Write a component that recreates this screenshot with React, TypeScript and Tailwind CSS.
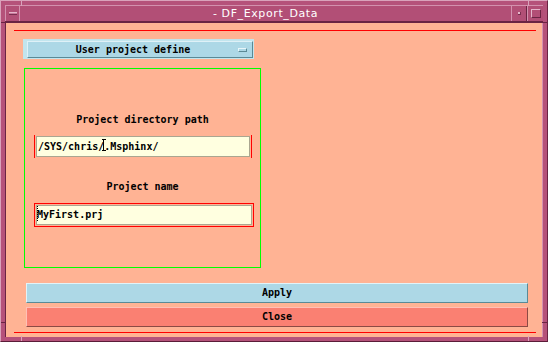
const mono = "font-['DejaVu_Sans_Mono',monospace] font-bold text-[10px] text-black";

const Notch = ({ className }: { className: string }) => (
  <div className={`absolute bg-[#6a2443] ${className}`} />
);

export default function App() {
  return (
    <div className="relative w-[548px] h-[342px] bg-[#b5527a] border-t border-l border-[#d9a3bb] border-r border-b border-r-[#6a2443] border-b-[#5a1c38] p-[4px] flex flex-col">
      {/* resize corner marks */}
      <Notch className="left-[20px] top-0 w-px h-[5px] bg-[#d9a3bb]" />
      <Notch className="left-[527px] top-0 w-px h-[5px] bg-[#d9a3bb]" />
      <Notch className="left-0 top-[21px] w-[5px] h-px" />
      <Notch className="right-0 top-[21px] w-[5px] h-px" />
      <Notch className="left-0 top-[321px] w-[5px] h-px" />
      <Notch className="right-0 top-[321px] w-[5px] h-px" />
      <Notch className="left-[20px] bottom-0 w-px h-[5px] bg-[#d9a3bb]" />
      <Notch className="left-[527px] bottom-0 w-px h-[5px] bg-[#d9a3bb]" />

      {/* title bar */}
      <div className="h-[17px] flex bg-[#b24f76] border-t border-[#d391ae] border-b border-b-[#6a2443] shrink-0">
        <div className="w-[15px] border-l border-[#d391ae] border-r border-r-[#d391ae] flex items-center justify-center">
          <div className="w-[8px] h-[3px] bg-[#c97a9c] border-t border-[#e4b6ca] border-b border-b-[#7a2e4f]" />
        </div>
        <div className="flex-1 flex items-center justify-center text-white text-[11px] leading-none font-['DejaVu_Sans',sans-serif] tracking-[0.6px]">
          - DF_Export_Data
        </div>
        <div className="w-[16px] border-l border-[#d391ae] border-r border-r-[#6a2443] flex items-center justify-center">
          <div className="w-[3px] h-[3px] bg-[#e4b6ca] border-b border-r border-[#7a2e4f]" />
        </div>
        <div className="w-[16px] border-l border-[#d391ae] flex items-center justify-center">
          <div className="w-[10px] h-[9px] border border-[#e4b6ca] border-b-[#6a2443] border-r-[#6a2443]" />
        </div>
      </div>

      {/* client area */}
      <div className="flex-1 bg-[#ffb394] border-l border-t border-[#6a2443] border-r border-r-[#d391ae] flex flex-col">
        <div className="mt-[7px] ml-[8px] mr-[6px] h-px bg-[#ff0000]" />

        <div className="mt-[8px] ml-[17px] w-[231px] h-[20px] bg-[#c2e5ee] pl-[4px] pt-[2px] pr-px pb-px">
          <div className="h-full bg-[#add8e6] border-t border-l border-[#dff1f7] border-b border-r border-b-[#5a8a96] border-r-[#5a8a96] flex items-center">
            <span className={`flex-1 text-center leading-none ${mono}`}>User project define</span>
            <div className="w-[9px] h-[4px] mr-[5px] bg-[#add8e6] border-t border-l border-[#e8f6fa] border-b border-r border-b-[#5a8a96] border-r-[#5a8a96]" />
          </div>
        </div>

        <div className="mt-[9px] ml-[18px] w-[237px] h-[200px] border border-[#00ff00] flex flex-col pt-[45px]">
          <div className={`text-center leading-[12px] ${mono}`}>Project directory path</div>
          <div className="mt-[9px] ml-[9px] w-[218px] h-[23px] border-x border-[#ff0000] p-px">
            <div className="h-full bg-[#ffffe0] border border-[#aaa690] flex items-center pl-px">
              <span className={`leading-none whitespace-pre ${mono}`}>
                /SYS/chris/
                <span className="relative inline-block w-0 h-[10px] align-middle">
                  <span className="absolute left-[-2px] top-[-3px] w-[4px] h-[12px] border-t border-b border-black">
                    <span className="absolute left-[1px] top-0 w-px h-full bg-black" />
                  </span>
                </span>
                .Msphinx/
              </span>
            </div>
          </div>

          <div className={`mt-[23px] text-center leading-[12px] ${mono}`}>Project name</div>
          <div className="mt-[10px] ml-[9px] w-[220px] h-[24px] border border-[#ff0000] p-px">
            <div className="h-full bg-[#ffffe0] border border-[#aaa690] flex items-center">
              <span className={`leading-none whitespace-pre ${mono}`}>
                <span className="relative inline-block w-0 h-[10px] align-middle">
                  <span className="absolute left-0 top-[-4px] h-[15px] border-l border-dotted border-black" />
                </span>
                MyFirst.prj
              </span>
            </div>
          </div>
        </div>

        <button className={`mt-[15px] ml-[20px] w-[502px] h-[20px] bg-[#add8e6] border-t border-l border-[#e2f3f8] border-b border-r border-b-[#5a8a96] border-r-[#5a8a96] leading-none ${mono}`}>
          Apply
        </button>
        <button className={`mt-[4px] ml-[20px] w-[502px] h-[20px] bg-[#fa8072] border-t border-l border-[#ffc0b6] border-b border-r border-b-[#8b4a44] border-r-[#8b4a44] leading-none ${mono}`}>
          Close
        </button>

        <div className="mt-[5px] ml-[8px] mr-[6px] h-px bg-[#ff0000]" />
      </div>
    </div>
  );
}
